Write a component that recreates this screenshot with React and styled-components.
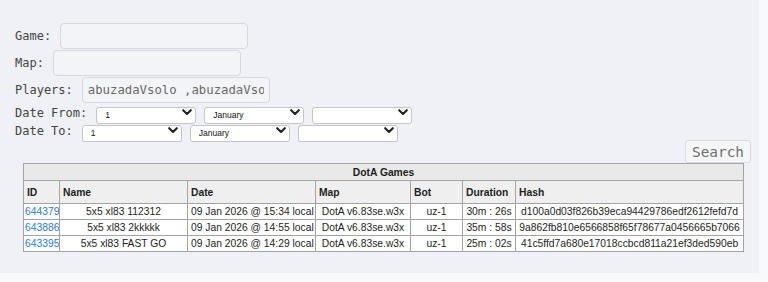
import React from 'react';
import styled, { createGlobalStyle } from 'styled-components';

const GlobalStyle = createGlobalStyle`
  html, body {
    margin: 0;
    padding: 0;
    background: #f8f9fb;
  }
`;

const games = [
  { id: '644379', name: '5x5 xl83 112312', date: '09 Jan 2026 @ 15:34 local', map: 'DotA v6.83se.w3x', bot: 'uz-1', duration: '30m : 26s', hash: 'd100a0d03f826b39eca94429786edf2612fefd7d' },
  { id: '643886', name: '5x5 xl83 2kkkkk', date: '09 Jan 2026 @ 14:55 local', map: 'DotA v6.83se.w3x', bot: 'uz-1', duration: '35m : 58s', hash: '9a862fb810e6566858f65f78677a0456665b7066' },
  { id: '643395', name: '5x5 xl83 FAST GO', date: '09 Jan 2026 @ 14:29 local', map: 'DotA v6.83se.w3x', bot: 'uz-1', duration: '25m : 02s', hash: '41c5ffd7a680e17018ccbcd811a21ef3ded590eb' },
];

function Chevron() {
  return (
    <svg width="10" height="7" viewBox="0 0 10 7">
      <polyline points="1.2,1.2 5,5 8.8,1.2" fill="none" stroke="#222" strokeWidth="2.1" strokeLinecap="round" strokeLinejoin="round" />
    </svg>
  );
}

function DateSelect({ value }) {
  return (
    <SelectWrap>
      <Select defaultValue={value}>
        <option value={value}>{value}</option>
      </Select>
      <ChevronBox><Chevron /></ChevronBox>
    </SelectWrap>
  );
}

function App() {
  return <>
    <GlobalStyle />
    <Panel>
      <Form>
        <FieldRow>
          <Label>Game:</Label>
          <TextInput type="text" />
        </FieldRow>
        <FieldRow>
          <Label>Map:</Label>
          <TextInput type="text" />
        </FieldRow>
        <FieldRow>
          <Label>Players:</Label>
          <TextInput type="text" defaultValue="abuzadaVsolo ,abuzadaVsolo" />
        </FieldRow>
        <DateRow>
          <Label>Date From:</Label>
          <Selects>
            <DateSelect value="1" />
            <DateSelect value="January" />
            <DateSelect value="" />
          </Selects>
        </DateRow>
        <DateRow>
          <Label>Date To:</Label>
          <Selects>
            <DateSelect value="1" />
            <DateSelect value="January" />
            <DateSelect value="" />
          </Selects>
        </DateRow>
      </Form>
      <Actions>
        <SearchButton type="button">Search</SearchButton>
      </Actions>
      <GamesTable>
        <colgroup>
          <col style={{ width: 36 }} />
          <col style={{ width: 128 }} />
          <col style={{ width: 128 }} />
          <col style={{ width: 95 }} />
          <col style={{ width: 52 }} />
          <col style={{ width: 53 }} />
          <col style={{ width: 228 }} />
        </colgroup>
        <thead>
          <TitleRow>
            <th colSpan={7}>DotA Games</th>
          </TitleRow>
          <HeadRow>
            <th>ID</th>
            <th>Name</th>
            <th>Date</th>
            <th>Map</th>
            <th>Bot</th>
            <th>Duration</th>
            <th>Hash</th>
          </HeadRow>
        </thead>
        <tbody>
          {games.map(g => (
            <DataRow key={g.id}>
              <Cell $align="left" $pad="1px"><GameLink href="#">{g.id}</GameLink></Cell>
              <Cell>{g.name}</Cell>
              <Cell $align="left" $pad="3px">{g.date}</Cell>
              <Cell>{g.map}</Cell>
              <Cell>{g.bot}</Cell>
              <Cell>{g.duration}</Cell>
              <Cell>{g.hash}</Cell>
            </DataRow>
          ))}
        </tbody>
      </GamesTable>
    </Panel>
  </>;
}

const Panel = styled.div`
  width: 759px;
  height: 273px;
  box-sizing: border-box;
  padding: 23px 0 0 15px;
  background: #eff1f6;
`;

const Form = styled.div`
  display: flex;
  flex-direction: column;
  gap: 1px;
`;

const FieldRow = styled.div`
  display: flex;
  align-items: center;
  gap: 9px;
  height: 26px;
`;

const DateRow = styled(FieldRow)`
  height: 17px;
`;

const Label = styled.span`
  font-family: "DejaVu Sans Mono", monospace;
  font-size: 12px;
  color: #454545;
  white-space: pre;
`;

const TextInput = styled.input`
  width: 188px;
  height: 26px;
  box-sizing: border-box;
  padding: 0 5px;
  border: 1px solid #d5d8de;
  border-radius: 4px;
  background: #f2f4f8;
  font-family: "DejaVu Sans Mono", monospace;
  font-size: 12.3px;
  color: #6a6a6a;
  outline: none;
`;

const Selects = styled.div`
  display: flex;
  gap: 8px;
`;

const SelectWrap = styled.div`
  position: relative;
  width: 100px;
  height: 17px;
`;

const Select = styled.select`
  appearance: none;
  width: 100%;
  height: 100%;
  box-sizing: border-box;
  margin: 0;
  padding: 0 14px 0 8px;
  border: 1px solid #c3c5c9;
  border-radius: 3px;
  background: #ffffff;
  font-family: "Liberation Sans", Arial, sans-serif;
  font-size: 8.5px;
  color: #111;
  outline: none;
`;

const ChevronBox = styled.span`
  position: absolute;
  right: 4px;
  top: 5px;
  display: flex;
  pointer-events: none;
`;

const Actions = styled.div`
  display: flex;
  justify-content: flex-end;
  padding-right: 8px;
  margin-top: 1px;
`;

const SearchButton = styled.button`
  width: 66px;
  height: 23px;
  padding: 0;
  border: 1px solid #d9dce1;
  border-radius: 3px;
  background: #f5f6f8;
  font-family: "DejaVu Sans Mono", monospace;
  font-size: 14.4px;
  color: #707070;
`;

const GamesTable = styled.table`
  margin-left: 8px;
  width: 720px;
  table-layout: fixed;
  border-collapse: collapse;
  border: 1px solid #a4a4a4;
  font-family: "Liberation Sans", Arial, sans-serif;
  font-size: 10.3px;
  color: #1e1e1e;

  th {
    border: 1px solid #a4a4a4;
    padding: 0 3px;
    font-weight: bold;
    white-space: nowrap;
    overflow: hidden;
  }
`;

const TitleRow = styled.tr`
  height: 17px;
  background: #e9e9e9;

  th {
    text-align: center;
    padding-top: 1px;
  }
`;

const HeadRow = styled.tr`
  height: 23px;
  background: #efefef;

  th {
    text-align: left;
  }
`;

const DataRow = styled.tr`
  height: 16px;
  background: #ffffff;
`;

const Cell = styled.td`
  border: 1px solid #a4a4a4;
  padding: 0 ${props => props.$pad || '0'};
  text-align: ${props => props.$align || 'center'};
  white-space: nowrap;
  overflow: hidden;
`;

const GameLink = styled.a`
  color: #2a7ad6;
  text-decoration: none;
`;

export default App;
